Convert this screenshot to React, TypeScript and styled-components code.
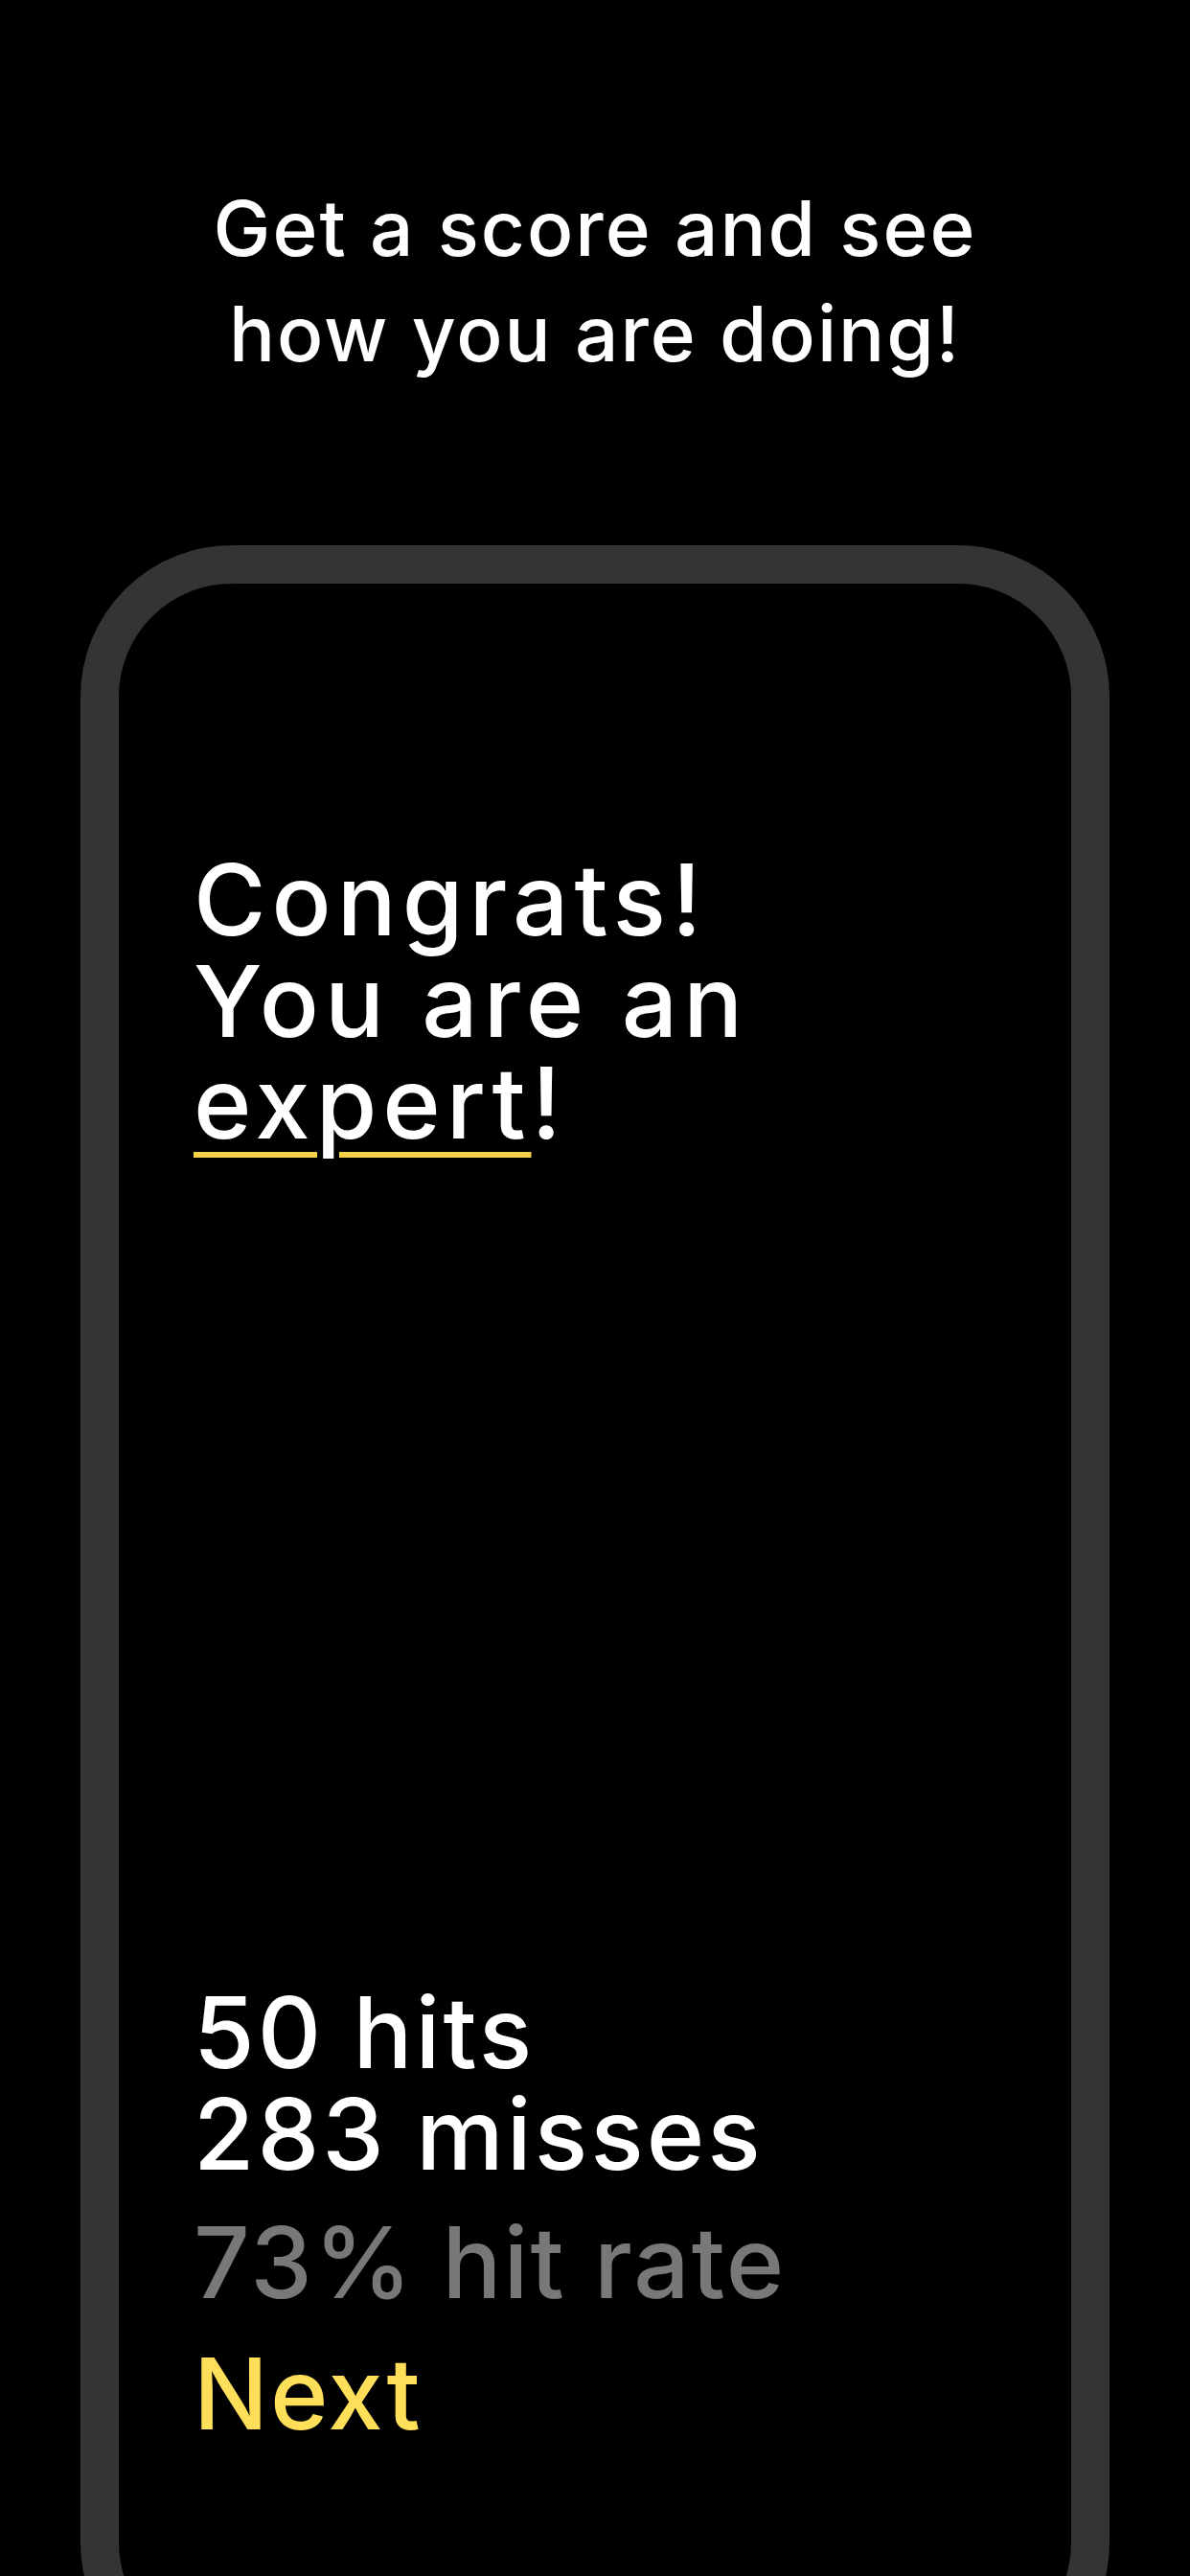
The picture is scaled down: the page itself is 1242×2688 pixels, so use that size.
import styled, { createGlobalStyle } from "styled-components";

const GlobalStyle = createGlobalStyle`
  html, body {
    margin: 0;
    padding: 0;
    background: #000000;
    overflow: hidden;
  }
  body {
    font-family: Inter, "Noto Sans", sans-serif;
    color: #ffffff;
  }
`;

const Page = styled.main`
  min-height: 2688px;
  padding-top: 183px;
  display: flex;
  flex-direction: column;
  align-items: center;
`;

const Intro = styled.h2`
  margin: 0 0 166px;
  font-size: 80px;
  line-height: 110px;
  font-weight: 500;
  text-align: center;
  letter-spacing: 2px;
`;

const Frame = styled.section`
  box-sizing: border-box;
  width: 1074px;
  height: 2242px;
  border: 40px solid #343434;
  border-radius: 158px;
  padding: 277px 40px 220px 78px;
  display: flex;
  flex-direction: column;
  justify-content: space-between;
`;

const BigText = styled.p<{ $tone?: "white" | "gray" | "yellow"; $spacing?: number }>`
  margin: 0;
  font-size: 103px;
  line-height: 106px;
  font-weight: 500;
  letter-spacing: ${(p) => p.$spacing ?? 3}px;
  color: ${(p) =>
    p.$tone === "gray" ? "#787878" : p.$tone === "yellow" ? "#ffde59" : "#ffffff"};
`;

const Highlight = styled.span`
  text-decoration: underline;
  text-decoration-color: #f6d24b;
  text-decoration-thickness: 6px;
  text-underline-offset: 14px;
`;

const Stats = styled.div`
  display: flex;
  flex-direction: column;
`;

const Rate = styled(BigText)`
  margin-top: 28px;
`;

const NextButton = styled(BigText)`
  margin-top: 31px;
  cursor: pointer;
`;

export default function App() {
  return (
    <>
      <GlobalStyle />
      <Page>
        <Intro>
          Get a score and see
          <br />
          how you are doing!
        </Intro>
        <Frame>
          <BigText $spacing={6}>
            Congrats!
            <br />
            You are an
            <br />
            <Highlight>expert</Highlight>!
          </BigText>
          <Stats>
            <BigText $spacing={3}>
              50 hits
              <br />
              283 misses
            </BigText>
            <Rate $tone="gray" $spacing={2}>
              73% hit rate
            </Rate>
            <NextButton $tone="yellow" $spacing={2}>
              Next
            </NextButton>
          </Stats>
        </Frame>
      </Page>
    </>
  );
}
